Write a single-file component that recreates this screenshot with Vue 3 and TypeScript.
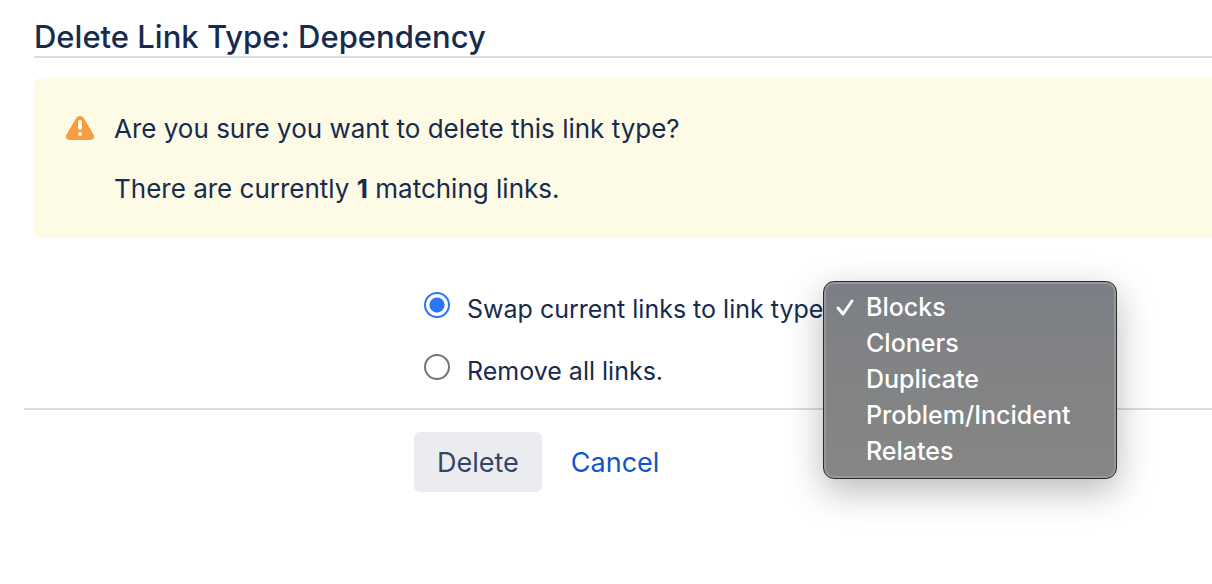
<script setup lang="ts">
import { ref } from 'vue'

const linkTypes: string[] = ['Blocks', 'Cloners', 'Duplicate', 'Problem/Incident', 'Relates']
const action = ref<'swap' | 'remove'>('swap')
const target = ref<string>('Blocks')
const matches = 1
</script>

<template>
  <main class="page">
    <h1 class="title">Delete Link Type: Dependency</h1>

    <section class="warning">
      <svg class="warning-icon" viewBox="0 0 28 24" aria-hidden="true">
        <path
          fill="#f59d40"
          d="M10 2.400C10.900.8 12.300 0 14 0s3.100.8 4 2.400l9.400 15.800c1.600 2.900.2 5.800-3 5.800H3.600c-3.200 0-4.600-2.900-3-5.800z"
        />
        <rect x="12" y="4" width="4" height="10" rx="2" fill="#fdfae5" />
        <circle cx="14" cy="18" r="2" fill="#fdfae5" />
      </svg>
      <div>
        <p>Are you sure you want to delete this link type?</p>
        <p>There are currently <strong>{{ matches }}</strong> matching links.</p>
      </div>
    </section>

    <form @submit.prevent>
      <div class="options">
        <div class="option-row">
          <input id="swap" v-model="action" type="radio" name="action" value="swap" />
          <label for="swap">Swap current links to link type:</label>
          <select v-model="target" class="menu" size="5" aria-label="Link type">
            <option v-for="type in linkTypes" :key="type" :value="type">{{ type }}</option>
          </select>
        </div>
        <div class="option-row">
          <input id="remove" v-model="action" type="radio" name="action" value="remove" />
          <label for="remove">Remove all links.</label>
        </div>
      </div>
      <div class="actions">
        <button type="submit">Delete</button>
        <a href="#">Cancel</a>
      </div>
    </form>
  </main>
</template>

<style>
body {
  background: #fff;
}
</style>

<style scoped>
.page {
  padding: 18px 0 80px 24px;
  color: #172b4d;
  font: 400 26px/40px Inter, "Liberation Sans", sans-serif;
}

.title {
  margin: 0 0 20px 10px;
  border-bottom: 2px solid #dcdcde;
  font-size: 31px;
  font-weight: 500;
  line-height: 38px;
}

.warning {
  display: flex;
  gap: 20px;
  margin-left: 10px;
  padding: 31px 32px 29px;
  border-radius: 6px 0 0 6px;
  background: #fdfae5;
}

.warning-icon {
  flex: none;
  width: 28px;
  height: 24px;
  margin-top: 7px;
}

.warning p {
  margin: 0;
}

.warning p + p {
  margin-top: 20px;
}

.options {
  display: flex;
  flex-direction: column;
  gap: 22px;
  padding: 51px 0 17px 400px;
  border-bottom: 2px solid #dcdcde;
  font-size: 25px;
}

.option-row {
  position: relative;
  display: flex;
  white-space: nowrap;
}

.option-row input {
  appearance: none;
  flex: none;
  box-sizing: border-box;
  width: 26px;
  height: 26px;
  margin: 3px 17px 0 0;
  border: 2px solid #767676;
  border-radius: 50%;
  background: #fff;
}

.option-row input:checked {
  border-color: #2a76f6;
  background: radial-gradient(circle, #2a76f6 7px, #fff 8px);
}

.menu {
  position: absolute;
  top: -8px;
  left: 399px;
  box-sizing: border-box;
  width: 294px;
  height: 198px;
  padding: 10px 0 6px;
  overflow: hidden;
  border: 1px solid #2b2b2b;
  border-radius: 11px;
  outline: none;
  background: linear-gradient(#7b7f85, #828384 50%, #868686);
  box-shadow: inset 0 0 0 2px #96989a, 0 12px 36px rgba(0, 0, 0, 0.28);
  color: #fff;
}

.menu option {
  min-height: 36px;
  padding: 0 0 0 42px;
  color: #fff;
  font: 500 25px/36px Inter, "Liberation Sans", sans-serif;
}

.menu option:checked {
  background: url("data:image/svg+xml,%3Csvg xmlns='http://www.w3.org/2000/svg' width='20' height='20' fill='none' stroke='white' stroke-width='3' stroke-linecap='round' stroke-linejoin='round'%3E%3Cpath d='M3 10l5 6L17 3'/%3E%3C/svg%3E") no-repeat 11px 6px;
}

.actions {
  display: flex;
  align-items: baseline;
  gap: 29px;
  padding: 22px 0 0 390px;
  font-size: 27px;
}

.actions button {
  padding: 11px 23px 9px;
  border: 0;
  border-radius: 6px;
  background: #ebecf0;
  color: #344563;
  font: inherit;
}

.actions a {
  color: #1254cc;
  text-decoration: none;
}
</style>
